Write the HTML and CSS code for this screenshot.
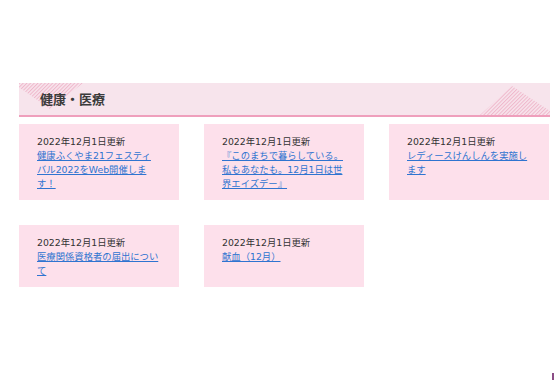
FILE: index.html
```html
<!DOCTYPE html>
<html lang="ja">
<head>
  <meta charset="UTF-8">
  <meta name="viewport" content="width=device-width, initial-scale=1.0">
  <title>健康・医療</title>
  <link rel="stylesheet" href="styles.css">
</head>
<body>
  <div class="section">
    <div class="section-head">
      <svg class="hatch hatch-left" width="66" height="26" viewBox="0 0 66 26">
        <defs>
          <pattern id="stripes" width="2.6" height="3" patternUnits="userSpaceOnUse" patternTransform="rotate(45)">
            <rect width="1" height="3" fill="#efb7cb"></rect>
          </pattern>
        </defs>
        <polygon points="-6,0 64,0 31,26" fill="url(#stripes)"></polygon>
      </svg>
      <svg class="hatch hatch-right" width="70" height="30" viewBox="0 0 70 30">
        <polygon points="0,30 32,1 76,30" fill="url(#stripes)"></polygon>
      </svg>
      <h2 class="section-title">健康・医療</h2>
    </div>

    <div class="news-grid">
      <div class="news-card">
        <div class="news-date">2022年12月1日更新</div>
        <a href="#">健康ふくやま21フェスティバル2022をWeb開催します！</a>
      </div>
      <div class="news-card">
        <div class="news-date">2022年12月1日更新</div>
        <a href="#">『このまちで暮らしている。私もあなたも。12月1日は世界エイズデー』</a>
      </div>
      <div class="news-card">
        <div class="news-date">2022年12月1日更新</div>
        <a href="#">レディースけんしんを実施します</a>
      </div>
      <div class="news-card">
        <div class="news-date">2022年12月1日更新</div>
        <a href="#">医療関係資格者の届出について</a>
      </div>
      <div class="news-card">
        <div class="news-date">2022年12月1日更新</div>
        <a href="#">献血（12月）</a>
      </div>
    </div>
  </div>

  <div class="page-top"></div>
</body>
</html>
```

FILE: styles.css
```css
body {
  margin: 0;
  font-family: "DejaVu Sans", "Noto Sans CJK JP", sans-serif;
  color: #333;
  background-color: #fff;
}

.section {
  width: 531px;
  padding: 83px 0 0 19px;
}

.section-head {
  position: relative;
  height: 32px;
  background-color: #f7e4ec;
  border-bottom: 2px solid #ef9fbc;
  overflow: hidden;
}

.hatch {
  position: absolute;
  display: block;
}

.hatch-left {
  left: 0;
  top: 0;
}

.hatch-right {
  right: 0;
  bottom: 0;
}

.section-title {
  position: relative;
  margin: 0;
  padding-left: 21px;
  font-family: "Noto Sans CJK JP", sans-serif;
  font-size: 13px;
  font-weight: 700;
  line-height: 32px;
  color: #3b3b3b;
}

.news-grid {
  display: grid;
  grid-template-columns: repeat(3, 160px);
  gap: 25px;
  margin-top: 7px;
}

.news-card {
  background-color: #fde0eb;
  padding: 11px 20px 9px 18px;
  font-size: 9.33px;
  line-height: 14px;
}

.news-date {
  color: #333;
}

.news-card a {
  color: #2f74d0;
  text-decoration: underline;
}

.page-top {
  position: absolute;
  left: 552px;
  top: 373px;
  width: 3px;
  height: 7px;
  background-color: #8c4d86;
}
```
